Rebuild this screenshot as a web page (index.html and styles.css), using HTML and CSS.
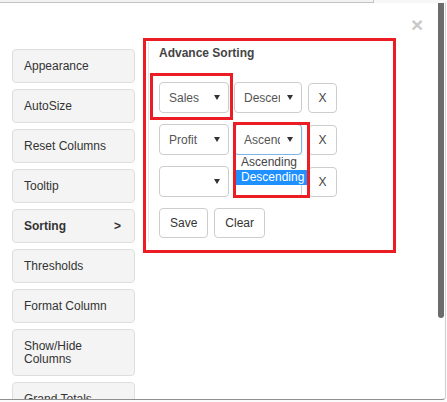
FILE: index.html
```html
<!DOCTYPE html>
<html>
<head>
<meta charset="utf-8">
<link rel="stylesheet" href="styles.css">
</head>
<body>
<div class="topbar"><div class="tab"></div></div>
<div class="modal">
  <button class="close" type="button">×</button>
  <div class="scrollbar"></div>
  <div class="body">
    <nav class="menu">
      <div class="menu-btn">Appearance</div>
      <div class="menu-btn">AutoSize</div>
      <div class="menu-btn">Reset Columns</div>
      <div class="menu-btn">Tooltip</div>
      <div class="menu-btn active"><span>Sorting</span><span class="chev">&gt;</span></div>
      <div class="menu-btn">Thresholds</div>
      <div class="menu-btn">Format Column</div>
      <div class="menu-btn">Show/Hide Columns</div>
      <div class="menu-btn">Grand Totals</div>
    </nav>
    <section class="sort-box">
      <div class="sort-panel">
        <h4 class="title">Advance Sorting</h4>
        <div class="rows">
          <div class="sort-row">
            <div class="sel sel-col"><span class="sel-text">Sales</span><svg class="caret" width="6" height="5" viewBox="0 0 6 5"><polygon points="0,0 6,0 3,5" fill="#333"/></svg></div>
            <div class="sel sel-dir"><span class="sel-text">Descending</span><svg class="caret" width="6" height="5" viewBox="0 0 6 5"><polygon points="0,0 6,0 3,5" fill="#333"/></svg></div>
            <button class="btn btn-x" type="button">X</button>
          </div>
          <div class="sort-row">
            <div class="sel sel-col"><span class="sel-text">Profit</span><svg class="caret" width="6" height="5" viewBox="0 0 6 5"><polygon points="0,0 6,0 3,5" fill="#333"/></svg></div>
            <div class="sel sel-dir focused"><span class="sel-text">Ascending</span><svg class="caret" width="6" height="5" viewBox="0 0 6 5"><polygon points="0,0 6,0 3,5" fill="#333"/></svg>
              <ul class="dropdown">
                <li>Ascending</li>
                <li class="hl">Descending</li>
              </ul>
            </div>
            <button class="btn btn-x" type="button">X</button>
          </div>
          <div class="sort-row">
            <div class="sel sel-col"><span class="sel-text"></span><svg class="caret" width="6" height="5" viewBox="0 0 6 5"><polygon points="0,0 6,0 3,5" fill="#333"/></svg></div>
            <div class="sel sel-dir"><span class="sel-text"></span></div>
            <button class="btn btn-x" type="button">X</button>
          </div>
          <div class="actions">
            <button class="btn" type="button">Save</button>
            <button class="btn" type="button">Clear</button>
          </div>
        </div>
      </div>
      <div class="mark mark-a"></div>
      <div class="mark mark-b"></div>
    </section>
  </div>
</div>
</body>
</html>
```

FILE: styles.css
```css
* { box-sizing: border-box; }
html, body { margin: 0; padding: 0; }
body {
  background: #fbfbfb;
  font-family: "Liberation Sans", Arial, sans-serif;
  font-size: 12px;
  color: #333;
  width: 447px;
  height: 402px;
  overflow: hidden;
}
.topbar { height: 3px; display: flex; background: #f7f7f7; }
.topbar .tab {
  width: 374px;
  height: 3px;
  background: #f2f2f2;
  border-bottom: 1px solid #c4c4c4;
  border-right: 1px solid #c4c4c4;
}
.modal {
  position: relative;
  width: 446px;
  height: 397px;
  background: #fff;
  border-right: 1px solid #cfcfcf;
  border-bottom: 1px solid #8f8f8f;
  border-bottom-right-radius: 4px;
  overflow: hidden;
}
.close {
  position: absolute;
  left: 411px;
  top: 11px;
  margin: 0;
  padding: 0;
  border: 0;
  background: transparent;
  font-family: "Liberation Sans", Arial, sans-serif;
  font-size: 21px;
  font-weight: bold;
  line-height: 21px;
  color: #c9c9c9;
}
.scrollbar {
  position: absolute;
  right: 1px;
  top: 0;
  width: 6px;
  height: 315px;
  background: #6b6b6b;
  border-radius: 0 0 3px 3px;
}
.body { display: flex; align-items: flex-start; }
.menu {
  display: flex;
  flex-direction: column;
  gap: 6px;
  padding: 46px 0 0 12px;
  width: 135px;
  flex-shrink: 0;
}
.menu-btn {
  display: flex;
  align-items: center;
  justify-content: space-between;
  min-height: 34px;
  padding: 9px 10px 9px 11px;
  line-height: 14px;
  background: #f4f4f4;
  border: 1px solid #dedede;
  border-radius: 4px;
  color: #333;
}
.menu-btn:nth-child(8) { min-height: 47px; padding-right: 40px; line-height: 13px; }
.menu-btn.active { font-weight: bold; }
.menu-btn .chev { margin-right: 3px; }
.sort-box {
  position: relative;
  margin: 35px 0 0 8px;
  width: 253px;
  height: 215px;
  border: 3px solid #ec1c24;
}
.sort-panel {
  margin: 1px 0 0 2px;
  height: 200px;
  border-left: 1px solid #e4e4e4;
  padding-left: 10px;
  padding-top: 4px;
}
.title {
  margin: 0 0 22px;
  font-size: 12px;
  line-height: 14px;
  font-weight: bold;
  color: #444;
}
.rows { display: flex; flex-direction: column; gap: 11px; }
.sort-row { display: flex; align-items: center; height: 31px; }
.sel {
  position: relative;
  display: flex;
  align-items: center;
  height: 31px;
  border: 1px solid #cdcdcd;
  border-radius: 4px;
  background: #fff;
  padding-left: 9px;
  color: #555;
}
.sel-col { width: 70px; margin-right: 5px; }
.sel-dir { width: 68px; margin-right: 6px; }
.sel-text {
  display: block;
  overflow: hidden;
  white-space: nowrap;
  width: 36px;
  line-height: 14px;
}
.sel-col .sel-text { width: 40px; }
.caret { position: absolute; right: 8px; top: 12px; }
.sel.focused {
  border-color: #7fb4e6;
  box-shadow: 0 0 2px rgba(102, 175, 233, 0.5);
}
.dropdown {
  position: absolute;
  left: 0;
  top: 30px;
  width: 72px;
  margin: 0;
  padding: 0;
  list-style: none;
  background: #fff;
  z-index: 2;
  color: #444;
}
.dropdown li {
  height: 15px;
  line-height: 14px;
  padding-left: 6px;
  white-space: nowrap;
}
.dropdown li.hl { background: #1e90ff; color: #fff; }
.btn {
  height: 30px;
  padding: 0 10px;
  margin: 0;
  border: 1px solid #cdcdcd;
  border-radius: 4px;
  background: #fff;
  font-family: "Liberation Sans", Arial, sans-serif;
  font-size: 12px;
  color: #333;
}
.btn-x { width: 29px; padding: 0; color: #444; }
.actions { display: flex; gap: 6px; }
.mark {
  position: absolute;
  border: 3px solid #ec1c24;
  z-index: 3;
}
.mark-a { left: 4px; top: 32px; width: 83px; height: 47px; }
.mark-b { left: 87px; top: 81px; width: 77px; height: 76px; }
```
